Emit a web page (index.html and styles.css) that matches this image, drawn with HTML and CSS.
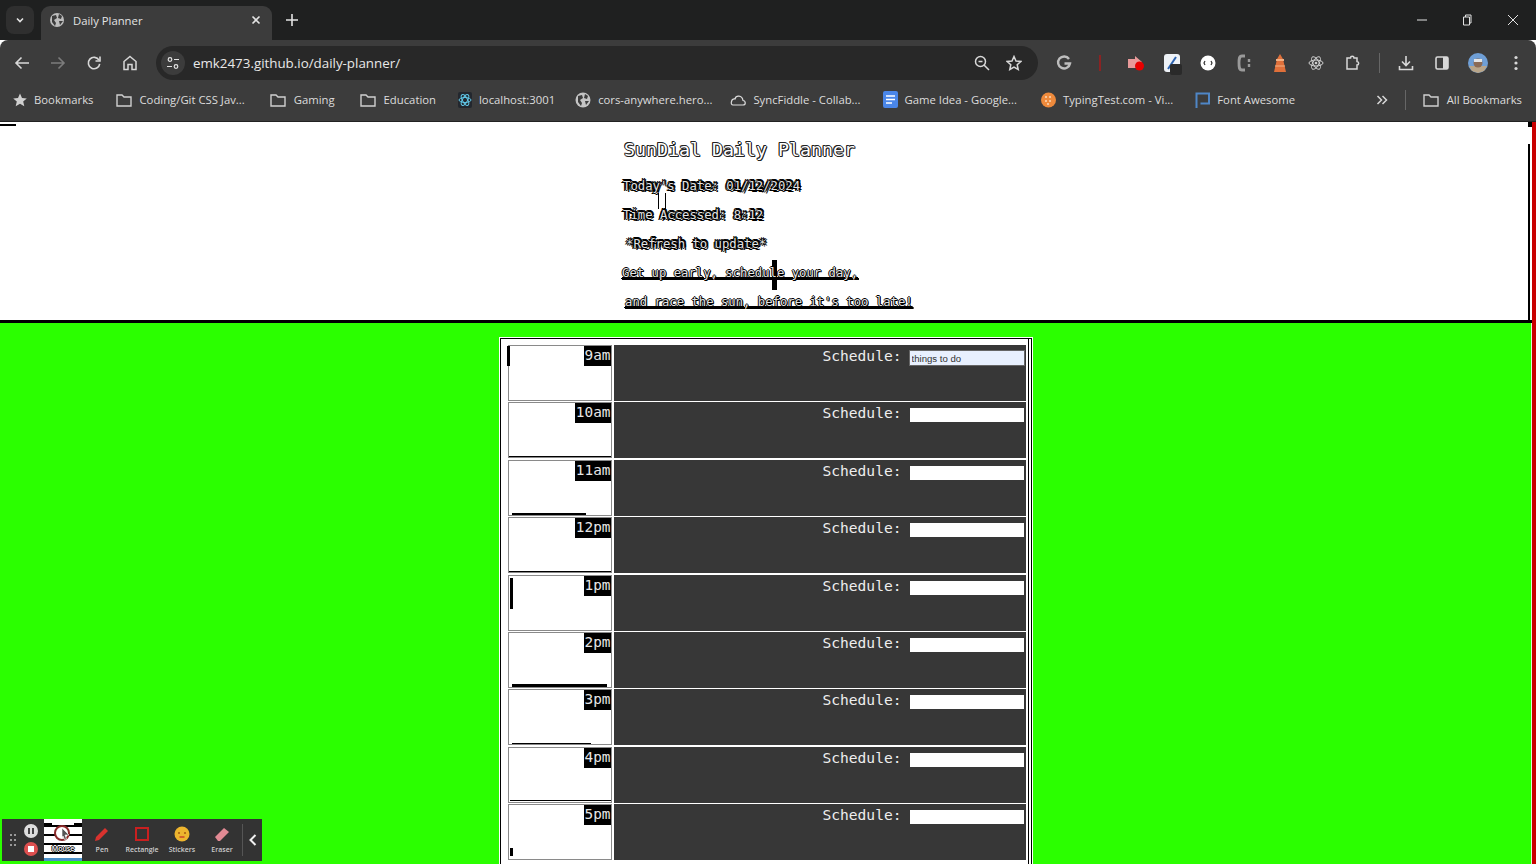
FILE: index.html
```html
<!DOCTYPE html>
<html lang="en">

<head>
    <meta charset="UTF-8">
    <title>Daily Planner</title>
    <link rel="stylesheet" href="styles.css">
</head>

<body>
<div class="tabstrip">
    <div class="tab-list-btn"><svg width="10" height="10" viewBox="0 0 10 10"><path d="M2 3.5 5 6.5 8 3.5" fill="none" stroke="#e3e3e3" stroke-width="1.6"/></svg></div>
    <div class="tab">
        <svg class="tab-globe" width="16" height="16" viewBox="0 0 16 16"><circle cx="8" cy="8" r="7" fill="#bdbdbd"/><path d="M3 4 7 3 8 6 5 8 7 11 6 14 3 10ZM10 2 13 4 12 7 9 6ZM10 9 14 9 11 13Z" fill="#3c3c3c"/></svg>
        <span class="tab-title">Daily Planner</span>
        <svg class="tab-close" width="10" height="10" viewBox="0 0 10 10"><path d="M1.5 1.5 8.5 8.5M8.5 1.5 1.5 8.5" stroke="#e3e3e3" stroke-width="1.6"/></svg>
    </div>
    <svg class="new-tab" width="12" height="12" viewBox="0 0 12 12"><path d="M6 0V12M0 6H12" stroke="#e3e3e3" stroke-width="1.6"/></svg>
    <div class="win-controls">
        <svg width="10" height="10" viewBox="0 0 10 10"><path d="M0 5H10" stroke="#e3e3e3"/></svg>
        <svg width="12" height="12" viewBox="0 0 12 12"><path d="M2.5 3H8.500V11H2.500ZM4.500 3V1H10V9H8.500" fill="none" stroke="#e3e3e3"/></svg>
        <svg width="12" height="12" viewBox="0 0 12 12"><path d="M1 1 11 11M11 1 1 11" stroke="#e3e3e3"/></svg>
    </div>
</div>

<div class="toolbar">
    <div class="nav-btns">
        <svg width="16" height="16" viewBox="0 0 16 16"><path d="M15 8H2M7.500 2.500 2 8l5.500 5.500" fill="none" stroke="#d8d8d8" stroke-width="1.600"/></svg>
        <svg width="16" height="16" viewBox="0 0 16 16"><path d="M1 8H14M8.500 2.500 14 8l-5.500 5.500" fill="none" stroke="#7c7c7c" stroke-width="1.600"/></svg>
        <svg width="16" height="16" viewBox="0 0 16 16"><path d="M13 5.200A5.700 5.700 0 1 0 13.700 8.800" fill="none" stroke="#d8d8d8" stroke-width="1.600"/><path d="M14 1.500V6H9.500" fill="none" stroke="#d8d8d8" stroke-width="1.600"/></svg>
        <svg width="16" height="16" viewBox="0 0 16 16"><path d="M8 1.500 14 6.500V14.500H10V9.500H6V14.500H2V6.500Z" fill="none" stroke="#d8d8d8" stroke-width="1.500"/></svg>
    </div>
    <div class="omnibox">
        <div class="site-info"><svg width="14" height="14" viewBox="0 0 14 14"><circle cx="4" cy="3.500" r="1.800" fill="none" stroke="#e3e3e3" stroke-width="1.200"/><path d="M8 3.500H13M1 10.500H6" stroke="#e3e3e3" stroke-width="1.200"/><circle cx="10" cy="10.500" r="1.800" fill="none" stroke="#e3e3e3" stroke-width="1.200"/></svg></div>
        <span class="url">emk2473.github.io/daily-planner/</span>
        <svg class="zoom-icon" width="16" height="16" viewBox="0 0 16 16"><circle cx="6.500" cy="6.500" r="5" fill="none" stroke="#d8d8d8" stroke-width="1.500"/><path d="M10 10 15 15M4.500 6.500H8.500" stroke="#d8d8d8" stroke-width="1.500"/></svg>
        <svg class="star-icon" width="16" height="16" viewBox="0 0 16 16"><path d="M8 1.500 10 6 14.800 6.500 11.200 9.700 12.200 14.500 8 12 3.800 14.500 4.800 9.700 1.200 6.500 6 6Z" fill="none" stroke="#d8d8d8" stroke-width="1.500"/></svg>
    </div>
    <div class="ext-btns">
        <svg width="16" height="16" viewBox="0 0 16 16"><path d="M13 4A6 6 0 1 0 14 8.500H8.500" fill="none" stroke="#bdbdbd" stroke-width="2.400"/></svg>
        <svg width="16" height="16" viewBox="0 0 16 16"><rect x="7" y="0" width="2" height="16" fill="#8a2323"/></svg>
        <svg width="18" height="18" viewBox="0 0 18 18"><path d="M1 5H8V2L15 8V14H1Z" fill="#e89a9a"/><circle cx="12.500" cy="12" r="4.500" fill="#e80000"/></svg>
        <svg width="20" height="22" viewBox="0 0 20 22"><rect x="0" y="0" width="16" height="18" rx="3" fill="#eef2f7"/><path d="M4 15 12 3" stroke="#2b62b0" stroke-width="2"/><rect x="6" y="10" width="12" height="11" rx="2" fill="#2a2a2a"/></svg>
        <svg width="16" height="16" viewBox="0 0 16 16"><circle cx="8" cy="8" r="7.500" fill="#fff"/><path d="M5 6 4 8 5 10M11 6 12 8 11 10" fill="none" stroke="#333" stroke-width="1.200"/></svg>
        <svg width="16" height="18" viewBox="0 0 16 18"><path d="M9 2H6C3 2 3 5 3 9S3 16 6 16H9" fill="none" stroke="#9a9a9a" stroke-width="2.800"/><path d="M13 5V8M13 10V13" stroke="#9a9a9a" stroke-width="2.400"/></svg>
        <svg width="16" height="20" viewBox="0 0 16 20"><path d="M5 6 8 1 11 6 14 19H2Z" fill="#e0703a"/><rect x="4" y="6" width="8" height="2" fill="#f3b083"/><path d="M3 13H13" stroke="#f3b083"/></svg>
        <svg width="16" height="16" viewBox="0 0 16 16"><g fill="none" stroke="#cfcfcf"><ellipse cx="8" cy="8" rx="7" ry="3"/><ellipse cx="8" cy="8" rx="7" ry="3" transform="rotate(60 8 8)"/><ellipse cx="8" cy="8" rx="7" ry="3" transform="rotate(120 8 8)"/></g><circle cx="8" cy="8" r="1.300" fill="#cfcfcf"/></svg>
        <svg width="16" height="16" viewBox="0 0 16 16"><path d="M3 3H6.500C6.500 .8 10 .8 10 3H13V6.500C15.200 6.500 15.200 10 13 10V14H3Z" fill="none" stroke="#d8d8d8" stroke-width="1.500"/></svg>
    </div>
    <div class="tb-sep"></div>
    <div class="end-btns">
        <svg width="16" height="16" viewBox="0 0 16 16"><path d="M8 1V10M4 6.500 8 10.500 12 6.500M1.500 11V14.500H14.500V11" fill="none" stroke="#d8d8d8" stroke-width="1.600"/></svg>
        <svg width="16" height="16" viewBox="0 0 16 16"><rect x="2" y="2" width="12" height="12" rx="1.500" fill="none" stroke="#d8d8d8" stroke-width="1.600"/><rect x="9" y="2" width="5" height="12" fill="#d8d8d8"/></svg>
        <svg width="20" height="20" viewBox="0 0 20 20"><circle cx="10" cy="10" r="10" fill="#6f9fd6"/><path d="M1 13H19L16 18 10 20 4 18Z" fill="#b9a68a"/><circle cx="10" cy="10" r="4.500" fill="#8b6b55"/><rect x="6" y="6" width="8" height="3" fill="#e4e4e4"/></svg>
        <svg width="4" height="16" viewBox="0 0 4 16"><circle cx="2" cy="2.500" r="1.600" fill="#d8d8d8"/><circle cx="2" cy="8" r="1.600" fill="#d8d8d8"/><circle cx="2" cy="13.500" r="1.600" fill="#d8d8d8"/></svg>
    </div>
</div>

<div class="bookmarks">
    <div class="bm bm-first"><svg width="14" height="14" viewBox="0 0 14 14"><path d="M7 .5 9 5 13.800 5.400 10.200 8.500 11.300 13.300 7 10.800 2.700 13.300 3.800 8.500 .2 5.400 5 5Z" fill="#d0d0d0"/></svg><span>Bookmarks</span></div>
    <div class="bm"><svg class="folder" width="16" height="14" viewBox="0 0 16 14"><path d="M1 2H6L8 4H15V13H1Z" fill="none" stroke="#cfcfcf" stroke-width="1.400"/></svg><span>Coding/Git CSS Jav...</span></div>
    <div class="bm bm-gaming"><svg class="folder" width="16" height="14" viewBox="0 0 16 14"><path d="M1 2H6L8 4H15V13H1Z" fill="none" stroke="#cfcfcf" stroke-width="1.400"/></svg><span>Gaming</span></div>
    <div class="bm bm-education"><svg class="folder" width="16" height="14" viewBox="0 0 16 14"><path d="M1 2H6L8 4H15V13H1Z" fill="none" stroke="#cfcfcf" stroke-width="1.400"/></svg><span>Education</span></div>
    <div class="bm"><svg width="14" height="16" viewBox="0 0 14 16"><rect width="14" height="16" rx="2" fill="#23272e"/><g fill="none" stroke="#61c8e8"><ellipse cx="7" cy="8" rx="6" ry="2.500"/><ellipse cx="7" cy="8" rx="6" ry="2.500" transform="rotate(60 7 8)"/><ellipse cx="7" cy="8" rx="6" ry="2.500" transform="rotate(120 7 8)"/></g></svg><span>localhost:3001</span></div>
    <div class="bm bm-cors"><svg width="16" height="16" viewBox="0 0 16 16"><circle cx="8" cy="8" r="7.500" fill="#c4c4c4"/><path d="M3 4 7 3 8 6 5 8 7 11 6 14 3 10ZM10 2 13 4 12 7 9 6ZM10 9 14 9 11 13Z" fill="#3c3c3c"/></svg><span>cors-anywhere.hero...</span></div>
    <div class="bm bm-sync"><svg width="16" height="12" viewBox="0 0 16 12"><path d="M3 11H13C16 11 16 7 13 6.500 12 1 6 1 5 5 1 4.500 0 11 3 11Z" fill="none" stroke="#dcdcdc" stroke-width="1.200"/></svg><span>SyncFiddle - Collab...</span></div>
    <div class="bm"><svg width="15" height="17" viewBox="0 0 15 17"><rect width="15" height="17" rx="2" fill="#4a86e8"/><path d="M3 5H12M3 8.500H12M3 12H9" stroke="#fff" stroke-width="1.500"/></svg><span>Game Idea - Google...</span></div>
    <div class="bm bm-typing"><svg width="15" height="16" viewBox="0 0 15 16"><circle cx="7.500" cy="8" r="7.500" fill="#ee8a3c"/><g fill="#fbd9b8"><circle cx="5" cy="5" r="1"/><circle cx="9" cy="5" r="1"/><circle cx="5" cy="9" r="1"/><circle cx="9" cy="9" r="1"/><circle cx="7" cy="12" r="1"/></g></svg><span>TypingTest.com - Vi...</span></div>
    <div class="bm"><svg width="15" height="16" viewBox="0 0 15 16"><path d="M1.500 16V1.500H14V11.500H5.500" fill="none" stroke="#4f86c6" stroke-width="2"/></svg><span>Font Awesome</span></div>
    <svg class="bm-more" width="12" height="10" viewBox="0 0 12 10"><path d="M1.500 1 5.500 5 1.500 9M6.500 1 10.500 5 6.500 9" fill="none" stroke="#d8d8d8" stroke-width="1.500"/></svg>
    <div class="bm-sep"></div>
    <div class="bm"><svg class="folder" width="16" height="14" viewBox="0 0 16 14"><path d="M1 2H6L8 4H15V13H1Z" fill="none" stroke="#cfcfcf" stroke-width="1.400"/></svg><span>All Bookmarks</span></div>
</div>

<div class="page">
    <div class="page-body">
        <header class="jumbo">
            <div class="jumbo-text">
                <h1>SunDial Daily Planner</h1>
                <p class="date-line">Today's Date: 01/12/2024</p>
                <p>Time Accessed: 8:12</p>
                <p class="refresh">*Refresh to update*</p>
                <p class="tagline tagline-first">Get up early, schedule your day,</p>
                <p class="tagline">and race the sun, before it's too late!</p>
            </div>
        </header>
        <main class="green">
            <div class="planner">
                <div class="row"><div class="hour mark-a"><span>9am</span></div><div class="sched"><label>Schedule:</label><input value="things to do" class="filled"></div></div>
                <div class="row"><div class="hour mark-b"><span>10am</span></div><div class="sched"><label>Schedule:</label><input></div></div>
                <div class="row"><div class="hour mark-c"><span>11am</span></div><div class="sched"><label>Schedule:</label><input></div></div>
                <div class="row"><div class="hour mark-d"><span>12pm</span></div><div class="sched"><label>Schedule:</label><input></div></div>
                <div class="row"><div class="hour mark-e"><span>1pm</span></div><div class="sched"><label>Schedule:</label><input></div></div>
                <div class="row"><div class="hour mark-f"><span>2pm</span></div><div class="sched"><label>Schedule:</label><input></div></div>
                <div class="row"><div class="hour mark-g"><span>3pm</span></div><div class="sched"><label>Schedule:</label><input></div></div>
                <div class="row"><div class="hour mark-h"><span>4pm</span></div><div class="sched"><label>Schedule:</label><input></div></div>
                <div class="row"><div class="hour mark-i"><span>5pm</span></div><div class="sched"><label>Schedule:</label><input></div></div>
            </div>
        </main>
    </div>
    <div class="red-edge"></div>
</div>

<div class="recorder">
    <div class="grip"><i></i><i></i><i></i><i></i><i></i><i></i></div>
    <div class="rec-btns">
        <svg width="14" height="14" viewBox="0 0 14 14"><circle cx="7" cy="7" r="7" fill="#ddd"/><path d="M5 4V10M9 4V10" stroke="#444" stroke-width="2"/></svg>
        <svg width="14" height="14" viewBox="0 0 14 14"><circle cx="7" cy="7" r="7" fill="#de5050"/><rect x="4" y="4" width="6" height="6" fill="#fff"/></svg>
    </div>
    <div class="rec-tool rec-mouse">
        <svg width="18" height="18" viewBox="0 0 18 18"><circle cx="8" cy="9" r="7" fill="#fff" stroke="#8b2a2a" stroke-width="2"/><path d="M8 4 15 11 11 11 12.500 15 10.500 15.500 9 12 8 14Z" fill="#555" stroke="#fff" stroke-width=".6"/></svg>
        <span>Mouse</span>
    </div>
    <div class="rec-tool">
        <svg width="18" height="18" viewBox="0 0 18 18"><path d="M2 16 3 12 12 3 15 6 6 15Z" fill="#d9322e"/></svg>
        <span>Pen</span>
    </div>
    <div class="rec-tool">
        <svg width="18" height="18" viewBox="0 0 18 18"><rect x="3" y="3" width="12" height="12" fill="none" stroke="#c92020" stroke-width="2"/></svg>
        <span>Rectangle</span>
    </div>
    <div class="rec-tool">
        <svg width="18" height="18" viewBox="0 0 18 18"><circle cx="9" cy="9" r="7.500" fill="#edb52e"/><circle cx="6" cy="8" r="1" fill="#a35a10"/><circle cx="12" cy="8" r="1" fill="#a35a10"/><path d="M6.500 12H11.500" stroke="#c8452a" stroke-width="1.500"/></svg>
        <span>Stickers</span>
    </div>
    <div class="rec-tool">
        <svg width="18" height="18" viewBox="0 0 18 18"><path d="M2 12 11 3 16 7 7 16H5Z" fill="#e28a94"/></svg>
        <span>Eraser</span>
    </div>
    <div class="rec-sep"></div>
    <svg class="rec-chevron" width="8" height="12" viewBox="0 0 8 12"><path d="M6.500 1 1.500 6 6.500 11" fill="none" stroke="#f0f0f0" stroke-width="2"/></svg>
</div>
</body>

</html>
```

FILE: styles.css
```css
* {
    box-sizing: border-box;
}

html,
body {
    margin: 0;
    height: 864px;
    overflow: hidden;
    background: #fff;
}

body {
    position: relative;
    display: flex;
    flex-direction: column;
    font-family: "Open Sans", "Noto Sans", sans-serif;
}

svg {
    display: block;
    flex: none;
}

/* browser window */
.tabstrip {
    display: flex;
    align-items: flex-end;
    height: 40px;
    background: #1f2020;
    color: #e3e3e3;
    font-size: 11.3px;
}

.tab-list-btn {
    display: flex;
    align-items: center;
    justify-content: center;
    width: 28px;
    height: 28px;
    margin: 0 7px 6px 6px;
    border-radius: 8px;
    background: #2f2f2f;
}

.tab {
    display: flex;
    align-items: center;
    width: 231px;
    height: 34px;
    padding: 0 11px 6px 8px;
    border-radius: 9px 9px 0 0;
    background: #3c3c3c;
}

.tab-title {
    flex: 1;
    margin-left: 8px;
}

.new-tab {
    margin: 0 0 14px 14px;
}

.win-controls {
    display: flex;
    align-items: center;
    gap: 34px;
    margin: 0 17px 14px auto;
}

.toolbar {
    display: flex;
    align-items: center;
    height: 41px;
    padding-top: 5px;
    border-radius: 8px 8px 0 0;
    background: #3c3c3c;
}

.nav-btns,
.ext-btns,
.end-btns {
    display: flex;
    align-items: center;
}

.nav-btns {
    gap: 20px;
    margin-left: 14px;
}

.omnibox {
    display: flex;
    align-items: center;
    width: 882px;
    height: 34px;
    margin-left: 18px;
    padding: 0 16px 0 5px;
    border-radius: 17px;
    background: #282828;
}

.site-info {
    display: flex;
    align-items: center;
    justify-content: center;
    width: 24px;
    height: 24px;
    border-radius: 50%;
    background: #3c3c3c;
}

.url {
    flex: 1;
    margin-left: 8px;
    color: #e8e8e8;
    font-size: 13.35px;
}

.star-icon {
    margin-left: 16px;
}

.ext-btns {
    gap: 20px;
    margin-left: 18px;
}

/* these three are bigger than the 16px slot, keep the pitch at 36 */
.ext-btns svg:nth-child(3) {
    margin: 0 -1px;
}

.ext-btns svg:nth-child(4) {
    margin: 2px -4px -2px 0;
}

.ext-btns svg:nth-child(7) {
    margin: -2px 0;
}

.tb-sep {
    width: 1px;
    height: 20px;
    margin: 0 18px 0 19px;
    background: #666;
}

.end-btns {
    gap: 20px;
}

.end-btns svg:nth-child(3) {
    margin: 0 -2px;
}

.end-btns svg:nth-child(4) {
    margin-left: 8px;
}

.bookmarks {
    display: flex;
    align-items: center;
    gap: 22px;
    height: 41px;
    padding: 0 14px 3px 13px;
    border-bottom: 1px solid #222;
    background: #3c3c3c;
    color: #dcdcdc;
    font-size: 11.3px;
}

.bm {
    display: flex;
    align-items: center;
    gap: 7px;
    white-space: nowrap;
}

.bm .folder {
    margin-right: 1px;
}

.bm-gaming,
.bm-education {
    margin-left: 3px;
}

.bm-cors {
    margin-left: -2px;
}

.bm-sync {
    margin-left: -4px;
}

.bm-typing {
    margin-left: 2px;
}

.bm-more {
    margin: 0 -5px 0 auto;
}

.bm-sep {
    width: 1px;
    height: 20px;
    margin-right: -5px;
    background: #666;
}

/* page */
.page {
    display: flex;
    flex: 1;
    min-height: 0;
}

.page-body {
    display: flex;
    flex: 1;
    flex-direction: column;
}

.red-edge {
    width: 4px;
    background: #c90000;
}

.jumbo {
    position: relative;
    display: flex;
    justify-content: center;
    height: 201px;
    padding-left: 6px;
    border-bottom: 3px solid #000;
    background: linear-gradient(#000, #000) right top / 4px 5px no-repeat, #fff;
}

/* stray bar, top left of the page */
.jumbo::before {
    content: "";
    position: absolute;
    left: 0;
    top: 2px;
    width: 16px;
    height: 2px;
    background: #000;
}

/* thin line down the right side */
.jumbo::after {
    content: "";
    position: absolute;
    right: 2px;
    top: 22px;
    bottom: 0;
    width: 2px;
    background: #000;
}

.jumbo-text {
    isolation: isolate;
    width: 292px;
    padding-top: 15px;
    font-family: "DejaVu Sans Mono", monospace;
    color: #e4e4e4;
}

h1 {
    margin: 0 0 17px;
    padding-left: 1px;
    font-size: 18.3px;
    font-weight: normal;
    line-height: 25px;
    color: #fff;
    text-shadow: 1px 0 #222, -1px 0 #222, 0 1px #222, 0 -1px #222, 1px 1px #222, -1px -1px #222;
}

.jumbo-text p {
    position: relative;
    height: 29px;
    margin: 0;
    font-size: 12.25px;
    line-height: 15px;
    text-shadow: 1px 0 #000, -1px 0 #000, 0 1px #000, 0 -1px #000, 2px 2px #000, -2px 1px #000, 1px -2px #000, -1px -2px #000, 2px -1px #000;
}

.date-line::after {
    content: "";
    position: absolute;
    left: 35px;
    top: 14px;
    width: 6px;
    height: 16px;
    border: solid #000;
    border-width: 0 1px;
}

.jumbo-text .refresh {
    padding-left: 3px;
}

.jumbo-text .tagline {
    padding-left: 2px;
    text-decoration: underline 1px #000;
    text-underline-offset: 1px;
    text-shadow: 1px 0 #000, -1px 0 #000, 0 1px #000, 0 -1px #000, 1px 1px #000;
}

.jumbo-text .tagline-first {
    padding-left: 0;
    margin-left: -1px;
}

.tagline-first::after {
    content: "";
    position: absolute;
    left: 150px;
    top: -6px;
    width: 5px;
    height: 30px;
    background: #000;
    z-index: -1;
}

.green {
    flex: 1;
    display: flex;
    justify-content: center;
    padding-top: 15px;
    border-right: 1px solid #d8ffd0;
    background: #2bff00;
}

.planner {
    display: flex;
    flex-direction: column;
    gap: 1.4px;
    width: 532px;
    height: 540px;
    padding: 6px 5px 0 7px;
    border: 1px solid #000;
    outline: 1px solid #fff;
    background: #fff;
    box-shadow: inset -2px 0 0 #fff, inset -3px 0 0 #000;
}

.row {
    display: flex;
    flex: none;
    gap: 2px;
    height: 56px;
    font-family: "DejaVu Sans Mono", monospace;
}

.hour {
    position: relative;
    width: 104px;
    border: 1px solid #8a8a8a;
    background: #fff;
    text-align: right;
    font-size: 14.4px;
    line-height: 18px;
    color: #e6e6e6;
}

.hour span {
    display: inline-block;
    height: 20px;
    padding-left: 1px;
    background: #000;
}

.hour::after {
    content: "";
    position: absolute;
    background: #000;
}

.mark-a::after {
    left: -2px;
    top: 0;
    width: 3px;
    height: 20px;
}

.mark-b::after {
    left: 0;
    right: 0;
    bottom: 0;
    height: 1px;
}

.mark-c::after {
    left: 3px;
    right: 25px;
    bottom: 0;
    height: 2px;
}

.mark-d::after {
    left: 0;
    right: 0;
    bottom: 0;
    height: 1px;
}

.mark-e::after {
    left: 1px;
    top: 2px;
    width: 3px;
    height: 31px;
}

.mark-f::after {
    left: 3px;
    right: 4px;
    bottom: 0;
    height: 3px;
}

.mark-g::after {
    left: 3px;
    right: 20px;
    bottom: 0;
    height: 1px;
}

.mark-h::after {
    left: 1px;
    right: 0;
    bottom: 1px;
    height: 1px;
}

.mark-i::after {
    left: 1px;
    bottom: 3px;
    width: 3px;
    height: 8px;
}

.sched {
    display: flex;
    flex: 1;
    justify-content: flex-end;
    align-items: flex-start;
    gap: 8px;
    padding-top: 2px;
    background: #373737;
    color: #eee;
    font-size: 14.6px;
    line-height: 18px;
}

.sched input {
    width: 114px;
    height: 14px;
    margin: 4px 2px 0 0;
    padding: 0 2px;
    border: 0;
    border-radius: 0;
    background: #fff;
    font-family: "Liberation Sans", Arial, sans-serif;
    font-size: 9.6px;
}

.sched input.filled {
    outline: 1px solid #666;
    background: #e8f0fe;
    color: #333;
}

/* screen recorder overlay */
.recorder {
    position: absolute;
    left: 2px;
    top: 819px;
    display: flex;
    align-items: stretch;
    width: 260px;
    height: 42px;
    background: #333;
    color: #ccc;
    font-size: 7px;
    font-weight: 600;
}

.grip {
    display: grid;
    grid-template-columns: 2px 2px;
    grid-auto-rows: 2px;
    gap: 3px 2px;
    align-content: center;
    width: 16px;
    padding-left: 8px;
}

.grip i {
    background: #999;
}

.rec-btns {
    display: flex;
    flex-direction: column;
    align-items: center;
    justify-content: center;
    gap: 4px;
    width: 26px;
}

.rec-tool {
    display: flex;
    flex-direction: column;
    align-items: center;
    width: 40px;
    padding-top: 6px;
    gap: 2px;
    white-space: nowrap;
}

.rec-tool svg {
    height: 18px;
}

.rec-tool span {
    line-height: 10px;
}

.rec-mouse {
    width: 38px;
    padding-top: 5px;
    border-bottom: 3px solid #4a90c8;
    background:
        linear-gradient(90deg, #000 0 8px, transparent 8px 30px, #000 30px) 0 4px / 100% 3px no-repeat,
        repeating-linear-gradient(0deg, #fff 0 4px, #000 4px 6px, #fff 6px 9px);
    color: #fff;
    text-shadow: 1px 0 #000, -1px 0 #000, 0 1px #000, 0 -1px #000;
}

.rec-sep {
    width: 1px;
    margin: 5px 0;
    background: #555;
}

.rec-chevron {
    align-self: center;
    margin-left: 6px;
}
```
